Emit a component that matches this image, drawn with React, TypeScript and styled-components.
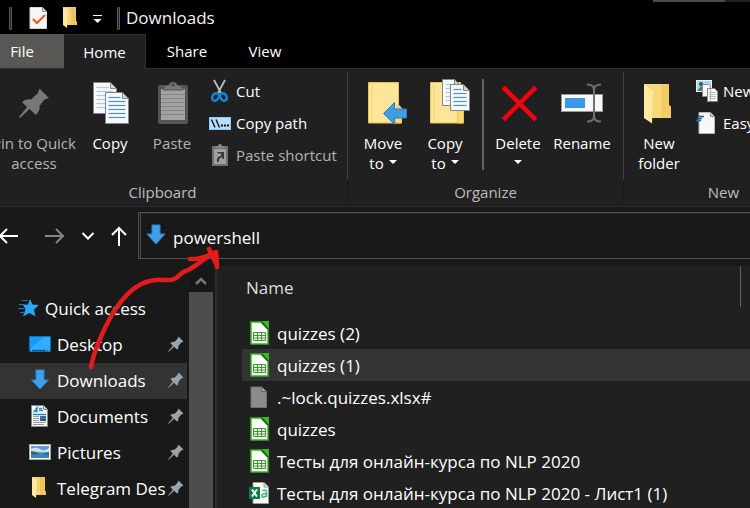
import React from "react";
import styled, { createGlobalStyle, css } from "styled-components";

const GlobalStyle = createGlobalStyle`
  *, *::before, *::after { box-sizing: border-box; }
  body { margin: 0; background: #202020; overflow: hidden; }
  button, input { font: inherit; color: inherit; }
  svg { display: block; overflow: visible; flex: none; }
`;

/* ---------- layout ---------- */

const Page = styled.main`
  position: relative;
  display: flex;
  flex-direction: column;
  height: 100vh;
  overflow: hidden;
  background: #191919;
  color: #fff;
  font-family: "Open Sans", "Noto Sans", sans-serif;
  font-size: 17px;
`;

const PlainButton = styled.button`
  display: flex;
  align-items: center;
  justify-content: center;
  border: 0;
  padding: 0;
  background: none;
  flex: none;
`;

const TitleBar = styled.header`
  position: relative;
  display: flex;
  align-items: center;
  height: 34px;
  padding: 2px 0 0 9px;
  background: #000;
  flex: none;
`;

const BackgroundEdge = styled.div`
  position: absolute;
  top: 0;
  right: 0;
  width: 97px;
  height: 2px;
  background: #202020;
  border-left: 72px solid #4b4b4b;
`;

const TitleSeparator = styled.span`
  width: 3px;
  height: 23px;
  border: 1px solid #5c5c5c;
  background: #222;
  border-radius: 1px;
`;

const QuickTools = styled.div`
  display: flex;
  gap: 10px;
  margin: 0 4px 0 15px;
`;

const QuickTool = styled(PlainButton)`
  width: 22px;
  height: 24px;
`;

const Title = styled.h1`
  margin: 0 0 0 6px;
  font-size: 17px;
  font-weight: 400;
  line-height: 24px;
  color: #f2f2f2;
`;

const Tabs = styled.nav`
  display: flex;
  height: 34px;
  margin-left: -20px;
  background: #000;
  font-size: 15px;
  flex: none;
`;

const Tab = styled(PlainButton)<{ $kind?: "file" | "active" | "narrow" }>`
  width: 82px;
  height: 34px;
  ${(p) => p.$kind === "narrow" && css`width: 74px;`}
  ${(p) => p.$kind === "file" && css`width: 84px; background: #595754;`}
  ${(p) =>
    p.$kind === "active" &&
    css`
      position: relative;
      height: 35px;
      background: #202020;
      border: solid #303030;
      border-width: 1px 1px 0 0;
    `}
`;

const Ribbon = styled.section`
  display: flex;
  border-top: 1px solid #303030;
  border-bottom: 1px solid #2b2b2b;
  padding: 3px 0 2px;
  background: #202020;
  font-size: 15px;
  overflow: hidden;
  flex: none;
`;

const Group = styled.section<{ $width: number; $offset?: number }>`
  width: ${(p) => p.$width}px;
  margin-left: ${(p) => p.$offset ?? 0}px;
  flex: none;
`;

const Commands = styled.div<{ $inset: number }>`
  display: flex;
  height: 108px;
  padding-left: ${(p) => p.$inset}px;
  border-right: 1px solid #414141;
`;

const GroupLabel = styled.h2`
  margin: 0;
  height: 24px;
  font-size: 15px;
  font-weight: 400;
  line-height: 24px;
  text-align: center;
  color: #bdbdbd;
  border-right: 1px solid #191919;
`;

const LargeCommand = styled(PlainButton)<{ $width?: number; $dim?: boolean }>`
  flex-direction: column;
  justify-content: flex-start;
  gap: 6px;
  width: ${(p) => p.$width ?? 62}px;
  padding-top: 7px;
  line-height: 20px;
  color: ${(p) => (p.$dim ? "#b4b4b4" : "#fff")};
`;

const CommandText = styled.span`
  white-space: nowrap;
  text-align: center;
`;

const Line = styled.span`
  display: flex;
  align-items: center;
  justify-content: center;
  gap: 5px;
  min-height: 20px;
`;

const Caret = styled.span`
  margin-bottom: 3px;
  border: solid transparent;
  border-width: 4px 4px 0;
  border-top-color: #fff;
`;

const CommandSeparator = styled.span`
  width: 2px;
  height: 91px;
  margin: 7px 3px 0 6px;
  background: #626262;
`;

const SmallCommands = styled.div`
  display: flex;
  flex-direction: column;
  padding: 3px 0 0 6px;
`;

const SmallCommand = styled(PlainButton)<{ $dim?: boolean }>`
  justify-content: flex-start;
  gap: 5px;
  height: 32px;
  white-space: nowrap;
  color: ${(p) => (p.$dim ? "#b4b4b4" : "#fff")};
`;

const AddressRow = styled.div`
  display: flex;
  align-items: flex-start;
  height: 59px;
  padding-top: 5px;
  background: #191919;
  flex: none;
`;

const History = styled.nav`
  display: flex;
  margin: 0 5px 0 -9px;
`;

const HistoryButton = styled(PlainButton)<{ $width: number; $gap?: number }>`
  width: ${(p) => p.$width}px;
  height: 48px;
  margin-left: ${(p) => p.$gap ?? 0}px;
`;

const AddressBox = styled.label`
  display: flex;
  flex: 1;
  height: 47px;
  border: solid #505050;
  border-width: 1px 0 1px 1px;
  padding-left: 1px;
`;

const AddressInner = styled.span`
  display: flex;
  flex: 1;
  align-items: center;
  gap: 6px;
  padding-left: 4px;
  border-left: 1px solid #505050;
  border-top: 1px solid #2c2c2c;
`;

const AddressInput = styled.input`
  flex: 1;
  min-width: 0;
  height: 32px;
  border: 0;
  padding: 3px 0 0;
  background: none;
  outline: none;
`;

const Body = styled.div`
  display: flex;
  flex: 1;
  min-height: 0;
`;

const Sidebar = styled.aside`
  width: 189px;
  padding: 25px 2px 0 0;
  flex: none;
  overflow: hidden;
`;

const SideList = styled.ul`
  list-style: none;
  margin: 0;
  padding: 0;
`;

const SideLink = styled.a<{ $root?: boolean; $active?: boolean }>`
  display: flex;
  align-items: center;
  gap: 5px;
  height: 36px;
  padding: 0 3px 2px ${(p) => (p.$root ? 18 : 28)}px;
  color: #fff;
  text-decoration: none;
  white-space: nowrap;
  background: ${(p) => (p.$active ? "#333" : "transparent")};
`;

const SideText = styled.span`
  flex: 1;
  min-width: 0;
`;

const ScrollTrack = styled.div`
  display: flex;
  flex-direction: column;
  width: 24px;
  background: #171717;
  flex: none;
`;

const ScrollButton = styled(PlainButton)`
  height: 26px;
  padding-top: 4px;
`;

const ScrollThumb = styled.div`
  flex: 1;
  background: #4d4d4d;
`;

const Content = styled.section`
  flex: 1;
  min-width: 0;
  margin-left: 2px;
  padding-left: 25px;
  border-left: 2px solid #2b2b2b;
  background: #202020;
  overflow: hidden;
`;

const FileTable = styled.table`
  width: 100%;
  border-spacing: 0;
  border-collapse: separate;
`;

const HeadCell = styled.th<{ $last?: boolean }>`
  height: 41px;
  width: ${(p) => (p.$last ? "9px" : "auto")};
  padding: ${(p) => (p.$last ? "0" : "2px 0 0 4px")};
  border-right: ${(p) => (p.$last ? "0" : "1px solid #636363")};
  font-weight: 400;
  text-align: left;
  color: #dedede;
`;

const GapCell = styled.td`
  height: 10px;
  padding: 0;
`;

const FileRow = styled.tr<{ $active?: boolean }>`
  background: ${(p) => (p.$active ? "#333" : "transparent")};
`;

const FileCell = styled.td`
  height: 32px;
  padding: 0 0 0 7px;
`;

const FileName = styled.span`
  display: flex;
  align-items: center;
  gap: 8px;
  white-space: nowrap;
`;

const Annotation = styled.svg`
  position: absolute;
  left: 0;
  top: 0;
  pointer-events: none;
`;

/* ---------- icons ---------- */

function Icon({ w = 22, h = 24, children }: { w?: number; h?: number; children: React.ReactNode }) {
  return (
    <svg width={w} height={h} viewBox={`0 0 ${w} ${h}`} aria-hidden="true">
      {children}
    </svg>
  );
}

function Sheet({ x, y, w, h, line, step = 4 }: { x: number; y: number; w: number; h: number; line: string; step?: number }) {
  const rows: number[] = [];
  for (let r = y + 5; r < y + h - 2; r += step) rows.push(r);
  return (
    <g>
      <path d={`M${x} ${y}h${w - 6}l6 6v${h - 6}h${-w}z`} fill="#f8f9fb" stroke="#858585" />
      <path d={`M${x + w - 6} ${y}v6h6z`} fill="#d5d5d5" stroke="#858585" />
      {rows.map((r, i) => (
        <path key={r} d={`M${x + 3} ${r}h${i === 0 ? w - 11 : w - 6}`} stroke={line} strokeWidth="1.2" />
      ))}
    </g>
  );
}

const FolderBack = () => (
  <>
    <path d="M9.500 3.500H39.500V26L42.500 29V44H9.500z" fill="#ffe59a" stroke="#e9c44f" />
    <path d="M36.500 44V30l3-4 3 4v14z" fill="#fbd971" stroke="#e9c44f" />
    <path d="M13 5v38" stroke="#f3d376" />
  </>
);

const SmallFolder = () => (
  <Icon>
    <path d="M4 1h13v14l1 1v3H8z" fill="#f6d373" />
    <path d="M12 1h5v14l1 1v3h-6z" fill="#edc45b" />
    <path d="M4 1l5 3-1 18-4-3z" fill="#ffe8a2" />
  </Icon>
);

const DownArrow = () => (
  <Icon>
    <path d="M7 1h8v9h5L11 20 2 10h5z" fill="#3f9fea" stroke="#2786d3" />
  </Icon>
);

const PinSmall = () => (
  <Icon w={16} h={18}>
    <path d="M10.500 1.500l5 5-2.300 1-2.700 3.200q.3 2.300-1.200 4L6 11.800.7 16.800l-.5-.5L4.800 10.700 2.300 8q2-1.500 4.200-1.200l3-3z" fill="#98a4ad" />
  </Icon>
);

const CalcFile = () => (
  <Icon w={20}>
    <path d="M2 1h10l7 7v15H2z" fill="#fff" stroke="#2fb51d" strokeWidth="1.500" />
    <path d="M12 0h8v8z" fill="#35b822" />
    <path d="M12.500 1l6.500 7" stroke="#165f10" strokeWidth="1.500" />
    <path d="M4.500 11.500h12v8h-12zM4.500 14.500h12M4.500 17h12M8.500 11.500v8M12.500 11.500v8" fill="none" stroke="#2f9f20" />
  </Icon>
);

const LockFile = () => (
  <Icon w={20}>
    <path d="M2 2h11l4.500 4.500V22.500H2z" fill="#8c8c8c" stroke="#717171" />
    <path d="M13 2v4.500h4.500z" fill="#b4b4b4" stroke="#626262" />
  </Icon>
);

const ExcelFile = () => (
  <Icon w={20}>
    <path d="M4 1.500h11l4.500 4.500v16.500H4z" fill="#fafafa" stroke="#9a9a9a" />
    <path d="M15 1.500V6h4.500" fill="#ddd" stroke="#9a9a9a" />
    <path d="M13.500 9.500q4-1.500 4 1.500v5M17.500 12.500q-4.500 0-4.500 2t2 1.500 2.500-1.500" fill="none" stroke="#37b87b" strokeWidth="1.600" />
    <rect x="0" y="6" width="11" height="12" fill="#107c41" />
    <path d="M3 8.500l5 7M8 8.500l-5 7" stroke="#fff" strokeWidth="1.900" />
  </Icon>
);

const fileIcons = { calc: CalcFile, lock: LockFile, excel: ExcelFile };

const files: { name: string; kind: keyof typeof fileIcons; active?: boolean }[] = [
  { name: "quizzes (2)", kind: "calc" },
  { name: "quizzes (1)", kind: "calc", active: true },
  { name: ".~lock.quizzes.xlsx#", kind: "lock" },
  { name: "quizzes", kind: "calc" },
  { name: "Тесты для онлайн-курса по NLP 2020", kind: "calc" },
  { name: "Тесты для онлайн-курса по NLP 2020 - Лист1 (1)", kind: "excel" },
];

const DesktopIcon = () => (
  <Icon w={24}>
    <rect x="1.500" y="4.500" width="21" height="15" fill="#159dfa" stroke="#0a70bd" />
    <path d="M2 17L16 5h6v12z" fill="#35adff" />
    <path d="M2 18.500h20" stroke="#07558f" />
    <path d="M3 18.500h1M18 18.500h1M20 18.500h1" stroke="#fff" />
  </Icon>
);

const DocumentsIcon = () => (
  <Icon w={24}>
    <path d="M3.500 1.500h12l4 4v17h-16z" fill="#fafafa" stroke="#8a8a8a" />
    <path d="M15.500 1.500v4h4" fill="#ccc" stroke="#8a8a8a" />
    <path d="M5.500 8.500L9 3.500v5M6.500 7H9M11 4.500h3M11 6.500h4M5 10.500h13" fill="none" stroke="#1c86cf" strokeWidth="1.300" />
    <path d="M5 12.500h6M5 14.500h6M5 16.500h6M5 18.500h13M5 20.500h11" stroke="#9a9a9a" />
    <rect x="12" y="12" width="6" height="5" fill="#2f6fae" />
    <path d="M12 17l3-2 3 1v1z" fill="#3d5b46" />
  </Icon>
);

const PicturesIcon = () => (
  <Icon w={24}>
    <rect x="1.500" y="4.500" width="21" height="15" fill="#fff" stroke="#a5a5a5" />
    <rect x="3" y="6" width="18" height="12" fill="#5a9bdc" />
    <path d="M3 9q5-3 9 0t9-1v4H3z" fill="#c9e2f5" />
    <path d="M3 11q5 0 9 3 5 0 9-2v3H3z" fill="#3d6b57" />
    <path d="M3 15q9-2 18 0v3H3z" fill="#3f82bb" />
  </Icon>
);

const places = [
  { name: "Desktop", icon: <DesktopIcon /> },
  { name: "Downloads", icon: <Icon w={24}><path d="M8 2h8v10h4.500L12 21 3.500 12H8z" fill="#3f9fea" stroke="#2786d3" /></Icon>, active: true },
  { name: "Documents", icon: <DocumentsIcon /> },
  { name: "Pictures", icon: <PicturesIcon /> },
  { name: "Telegram Des", icon: <Icon w={24}><SmallFolder /></Icon> },
];

/* ---------- page ---------- */

export default function App() {
  return (
    <Page>
      <GlobalStyle />

      <TitleBar>
        <BackgroundEdge />
        <TitleSeparator />
        <QuickTools>
          <QuickTool aria-label="Properties">
            <Icon>
              <path d="M3 1.500h12.500l4 4v17H3z" fill="#f7f7f7" stroke="#d5d5d5" />
              <path d="M15.500 1.500v4h4" fill="#ccc" stroke="#8a8a8a" />
              <path d="M6 13l4 4 8-8" fill="none" stroke="#e85a1a" strokeWidth="2" />
            </Icon>
          </QuickTool>
          <QuickTool aria-label="New folder"><SmallFolder /></QuickTool>
          <QuickTool aria-label="Customize toolbar">
            <Icon>
              <path d="M2 9.500h9" stroke="#fff" />
              <path d="M2.500 13h8l-4 4z" fill="#fff" />
            </Icon>
          </QuickTool>
        </QuickTools>
        <TitleSeparator />
        <Title>Downloads</Title>
      </TitleBar>

      <Tabs>
        <Tab $kind="file">File</Tab>
        <Tab $kind="active">Home</Tab>
        <Tab>Share</Tab>
        <Tab $kind="narrow">View</Tab>
      </Tabs>

      <Ribbon>
        <Group $width={370} $offset={-22}>
          <Commands $inset={11}>
            <LargeCommand $width={90} $dim>
              <Icon w={48} h={48}>
                <path d="M29.500 9.500L39 19l-4.500 1.500-5 6.500q1 4-3.500 9L19.500 30 10 39l-1-1 8-10-5-5q4-3.500 9-2.500l6.500-6z" fill="#777" />
              </Icon>
              <CommandText><Line>Pin to Quick</Line><Line>access</Line></CommandText>
            </LargeCommand>
            <LargeCommand>
              <Icon w={48} h={48}>
                <Sheet x={7.5} y={3.5} w={23} h={31} line="#a9c8f5" />
                <Sheet x={19.5} y={13.5} w={23} h={31} line="#4d8df0" />
              </Icon>
              <CommandText><Line>Copy</Line></CommandText>
            </LargeCommand>
            <LargeCommand $dim>
              <Icon w={48} h={48}>
                <rect x="10" y="6" width="30" height="39" rx="2" fill="#555" />
                <rect x="13" y="10" width="24" height="31" fill="#a2a2a2" />
                <path d="M13 15.500h24M13 19.500h24M13 23.500h24M13 27.500h24M13 31.500h24M13 35.500h24" stroke="#858585" />
                <path d="M15 11q0-4 6-5 1-3 4-3t4 3q6 1 6 5z" fill="#777" stroke="#555" />
                <circle cx="25" cy="6" r="1.500" fill="#444" />
              </Icon>
              <CommandText><Line>Paste</Line></CommandText>
            </LargeCommand>
            <SmallCommands>
              <SmallCommand>
                <Icon>
                  <path d="M5 1l7.500 14M16 1L8.500 15" stroke="#b5bcc2" strokeWidth="1.800" />
                  <ellipse cx="6.500" cy="18" rx="3" ry="4" transform="rotate(35 6.500 18)" fill="none" stroke="#1685d1" strokeWidth="2.500" />
                  <ellipse cx="14.500" cy="18" rx="3" ry="4" transform="rotate(-35 14.500 18)" fill="none" stroke="#1685d1" strokeWidth="2.500" />
                </Icon>
                Cut
              </SmallCommand>
              <SmallCommand>
                <Icon>
                  <rect x=".5" y="6.500" width="21" height="12" fill="#b9e0fb" stroke="#8fc9f2" />
                  <path d="M2.500 8.500l3.500 8M7 8.500l3.500 8" stroke="#111" strokeWidth="1.400" />
                  <path d="M12 14.500h2M15 14.500h2M18 14.500h2" stroke="#111" strokeWidth="1.800" />
                </Icon>
                Copy path
              </SmallCommand>
              <SmallCommand $dim>
                <Icon>
                  <rect x="3" y="3" width="16" height="20" fill="#707070" />
                  <rect x="5" y="6" width="12" height="15" fill="#a0a0a0" />
                  <path d="M6 5q0-2 3-2 0-2 2-2t2 2q3 0 3 2z" fill="#888" />
                  <path d="M8 19q-1-6 4-6v-2.500H8.500V9H15v7h-1.500v-1.500Q9.500 14 10 19z" fill="#3b3b3b" />
                </Icon>
                Paste shortcut
              </SmallCommand>
            </SmallCommands>
          </Commands>
          <GroupLabel>Clipboard</GroupLabel>
        </Group>

        <Group $width={276}>
          <Commands $inset={4}>
            <LargeCommand>
              <Icon w={48} h={48}>
                <FolderBack />
                <path d="M24.500 34.500L35.500 23.500v6.500H47.500v9H35.500v6.500z" fill="#3f9de8" stroke="#2380cc" />
              </Icon>
              <CommandText><Line>Move</Line><Line>to <Caret /></Line></CommandText>
            </LargeCommand>
            <LargeCommand>
              <Icon w={48} h={48}>
                <FolderBack />
                <Sheet x={21.5} y={0.5} w={18} h={26} line="#a9c8f5" />
                <Sheet x={29.5} y={5.5} w={19} h={26} line="#4d8df0" />
              </Icon>
              <CommandText><Line>Copy</Line><Line>to <Caret /></Line></CommandText>
            </LargeCommand>
            <CommandSeparator />
            <LargeCommand>
              <Icon w={48} h={48}>
                <path d="M9 8l33 33M42 8L9 41" stroke="#a8050d" strokeWidth="5" />
                <path d="M9.500 8.500l32 32M41.500 8.500l-32 32" stroke="#ea0613" strokeWidth="4" />
              </Icon>
              <CommandText><Line>Delete</Line><Line><Caret /></Line></CommandText>
            </LargeCommand>
            <LargeCommand $width={66}>
              <Icon w={48} h={48}>
                <rect x="3.500" y="15.500" width="41" height="17" fill="#f8f8f8" stroke="#9a9a9a" />
                <rect x="7" y="19" width="20" height="10" fill="#3897e6" />
                <path d="M29 5.500q7 0 7 5 0-5 7-5M36 9v30M29 42.500q7 0 7-5 0 5 7 5" fill="none" stroke="#707070" strokeWidth="2" />
              </Icon>
              <CommandText><Line>Rename</Line></CommandText>
            </LargeCommand>
          </Commands>
          <GroupLabel>Organize</GroupLabel>
        </Group>

        <Group $width={200}>
          <Commands $inset={4}>
            <LargeCommand>
              <Icon w={48} h={48}>
                <path d="M9 5h25v21l2 2v11H14z" fill="#f8d878" />
                <path d="M26 5h8v21l2 2v11H26z" fill="#f2cd67" />
                <path d="M9 5l9 7-1 32.500L9 39z" fill="#ffe8a0" />
              </Icon>
              <CommandText><Line>New</Line><Line>folder</Line></CommandText>
            </LargeCommand>
            <SmallCommands>
              <SmallCommand>
                <Icon>
                  <rect x=".5" y="1.500" width="15" height="11" fill="#a9d8f2" stroke="#e8f4fb" />
                  <circle cx="5" cy="5" r="2" fill="#2d5e4b" />
                  <path d="M1 12l4-5 4 5z" fill="#4a7d68" />
                  <path d="M6.500 5.500h6l2 2v10h-8z" fill="#fafafa" stroke="#8a8a8a" />
                  <path d="M11.500 9.500h7l3 3v10h-10z" fill="#fafafa" stroke="#8a8a8a" />
                  <path d="M13 13.500h7M13 15.500h7M13 17.500h7M13 19.500h7" stroke="#a9c4e8" />
                  <path d="M14.500 10v12" stroke="#e59a9a" />
                </Icon>
                New item
              </SmallCommand>
              <SmallCommand>
                <Icon>
                  <path d="M3 1.500h11.500l4 4v17H3z" fill="#f8f8f8" stroke="#b5b5b5" />
                  <path d="M14.500 1.500v4h4" fill="#ccc" stroke="#8a8a8a" />
                  <path d="M2 5.500h6M1 7.500h5M0 9.500h5" stroke="#1767a8" strokeWidth="1.300" />
                </Icon>
                Easy access
              </SmallCommand>
            </SmallCommands>
          </Commands>
          <GroupLabel>New</GroupLabel>
        </Group>
      </Ribbon>

      <AddressRow>
        <History>
          <HistoryButton $width={36} aria-label="Back">
            <Icon w={20} h={18}><path d="M1 9h18M8 2L1 9l7 7" fill="none" stroke="#fff" strokeWidth="2" /></Icon>
          </HistoryButton>
          <HistoryButton $width={36} $gap={9} aria-label="Forward">
            <Icon w={20} h={18}><path d="M1 9h18M12 2l7 7-7 7" fill="none" stroke="#858585" strokeWidth="2" /></Icon>
          </HistoryButton>
          <HistoryButton $width={34} $gap={-1} aria-label="Recent locations">
            <Icon w={14} h={10}><path d="M1.500 2L7 7.500 12.500 2" fill="none" stroke="#fff" strokeWidth="2" /></Icon>
          </HistoryButton>
          <HistoryButton $width={28} aria-label="Up">
            <Icon w={16} h={20}><path d="M8 20V2M1 9l7-7 7 7" fill="none" stroke="#fff" strokeWidth="2" /></Icon>
          </HistoryButton>
        </History>
        <AddressBox>
          <AddressInner>
            <DownArrow />
            <AddressInput aria-label="Address" defaultValue="powershell" />
          </AddressInner>
        </AddressBox>
      </AddressRow>

      <Body>
        <Sidebar>
          <SideList>
            <li>
              <SideLink href="#quick" $root>
                <Icon>
                  <path d="M12 3l2.500 5.500L21 9l-5 4.500 1.500 7L11.500 17 5 20.500l2.500-7L5 9l5-.5z" fill="#2ba5f5" />
                  <path d="M4 4.500h6M1 8.500h6M0 12.500h6M2 16.500h4" stroke="#1d79b8" />
                </Icon>
                <SideText>Quick access</SideText>
              </SideLink>
            </li>
            {places.map((p) => (
              <li key={p.name}>
                <SideLink href={`#${p.name}`} $active={p.active}>
                  {p.icon}
                  <SideText>{p.name}</SideText>
                  <PinSmall />
                </SideLink>
              </li>
            ))}
          </SideList>
        </Sidebar>
        <ScrollTrack>
          <ScrollButton aria-label="Scroll up">
            <Icon w={12} h={10}><path d="M1 8l5-5 5 5" fill="none" stroke="#777" strokeWidth="2.500" /></Icon>
          </ScrollButton>
          <ScrollThumb />
        </ScrollTrack>
        <Content>
          <FileTable>
            <thead>
              <tr>
                <HeadCell scope="col">Name</HeadCell>
                <HeadCell as="td" $last />
              </tr>
            </thead>
            <tbody>
              <tr><GapCell colSpan={2} /></tr>
              {files.map((f) => {
                const FileIcon = fileIcons[f.kind];
                return (
                  <FileRow key={f.name} $active={f.active}>
                    <FileCell colSpan={2}>
                      <FileName><FileIcon />{f.name}</FileName>
                    </FileCell>
                  </FileRow>
                );
              })}
            </tbody>
          </FileTable>
        </Content>
      </Body>

      <Annotation width="240" height="380" viewBox="0 0 240 380" aria-hidden="true">
        <g fill="none" stroke="#e41b1c" strokeWidth="4.500" strokeLinecap="round" strokeLinejoin="round">
          <path d="M91 367C94 350 106 323 117 307 128 291 142 281 156 280 164 279 171 282 176 278 180 275 181 272 188 270 197 266 204 258 214 253" />
          <path d="M190 259q10 1 26-7l1 15M209 249l8 17" />
        </g>
      </Annotation>
    </Page>
  );
}
